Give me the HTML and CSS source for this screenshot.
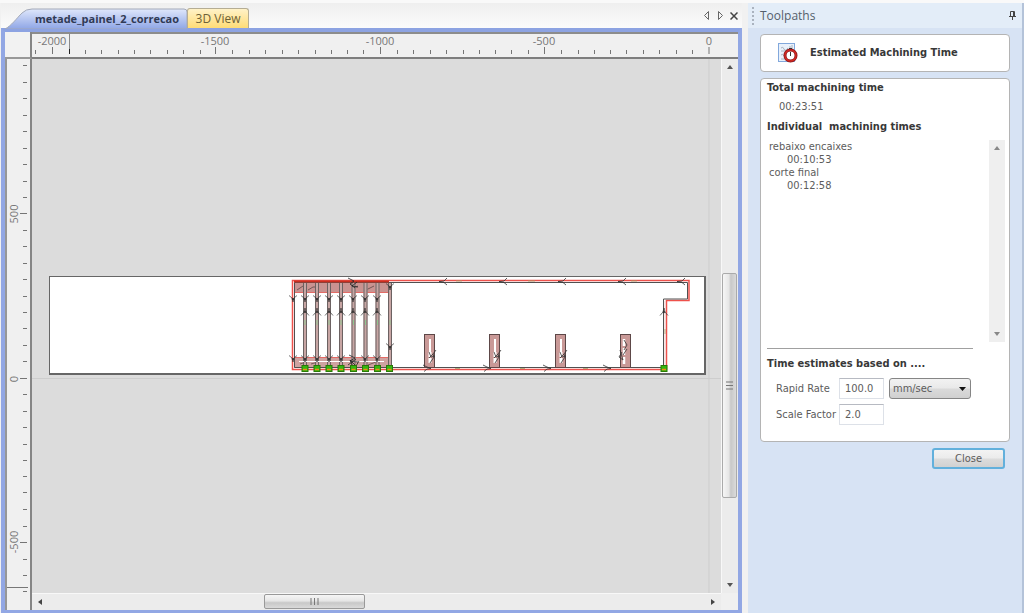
FILE: index.html
```html
<!DOCTYPE html>
<html lang="en">
<head>
<meta charset="utf-8">
<title>metade_painel_2_correcao</title>
<link rel="stylesheet" href="styles.css">
</head>
<body>
<div class="app">
  <main class="document">
    <div class="tabbar">
      <button class="tab tab-active" type="button">
        <svg class="tab-shape" width="184" height="21" viewBox="0 0 184 21" aria-hidden="true">
          <defs><linearGradient id="tabBlue" x1="0" y1="0" x2="0" y2="1"><stop offset="0" stop-color="#dfe7fb"/><stop offset="1" stop-color="#8fa6e6"/></linearGradient></defs>
          <path d="M0 21C6 18 12 10 17 5Q21 1 27 1H179Q182 1 182 4V21Z" fill="url(#tabBlue)" stroke="#a3a9b8"/>
        </svg>
        <span class="tab-label">metade_painel_2_correcao</span>
      </button>
      <button class="tab tab-view" type="button">3D View</button>
      <div class="tab-tools">
        <button class="tool" type="button" aria-label="Previous tab"><svg width="7" height="9" viewBox="0 0 7 9"><path d="M5.500 .5V8.500L1.500 4.500Z" fill="none" stroke="#666"/></svg></button>
        <button class="tool" type="button" aria-label="Next tab"><svg width="7" height="9" viewBox="0 0 7 9"><path d="M1.500 .5V8.500L5.500 4.500Z" fill="none" stroke="#666"/></svg></button>
        <button class="tool" type="button" aria-label="Close tab"><svg width="8" height="8" viewBox="0 0 8 8"><path d="M.5 .5L7.500 7.500M7.500 .5L.5 7.500" stroke="#444" stroke-width="1.500"/></svg></button>
      </div>
    </div>
    <div class="frame">
      <div class="corner"></div>
      <div class="ruler-top">
        <svg class="fill" aria-label="Horizontal ruler">
          <g transform="translate(-32 -34)">
            <path d="M35.500 50v4M85.500 50v4M101.500 50v4M118.500 50v4M134.500 50v4M150.500 50v4M167.500 50v4M183.500 50v4M200.500 50v4M232.500 50v4M249.500 50v4M265.500 50v4M282.500 50v4M298.500 50v4M315.500 50v4M331.500 50v4M347.500 50v4M363.500 50v4M397.500 50v4M413.500 50v4M430.500 50v4M446.500 50v4M463.500 50v4M479.500 50v4M495.500 50v4M511.500 50v4M528.500 50v4M561.500 50v4M578.500 50v4M594.500 50v4M610.500 50v4M626.500 50v4M643.500 50v4M659.500 50v4M676.500 50v4M692.500 50v4M52.500 47v7M215.500 47v7M380.500 47v7M544.500 47v7M709 47v7" stroke="#757575"/>
            <path d="M69.500 34V54" stroke="#8a8a8a"/><path d="M69.500 49V54" stroke="#222"/>
            <g class="scale" text-anchor="middle"><text x="52" y="45">-2000</text><text x="215" y="45">-1500</text><text x="380" y="45">-1000</text><text x="544" y="45">-500</text><text x="709" y="45">0</text></g>
          </g>
        </svg>
      </div>
      <div class="ruler-left">
        <svg class="fill" aria-label="Vertical ruler">
          <g transform="translate(-7 -59)">
            <path d="M23 65.500h4M23 82.500h4M23 98.500h4M23 115.500h4M23 131.500h4M23 148.500h4M23 164.500h4M23 181.500h4M23 197.500h4M23 230.500h4M23 246.500h4M23 263.500h4M23 279.500h4M23 296.500h4M23 312.500h4M23 328.500h4M23 345.500h4M23 361.500h4M23 394.500h4M23 411.500h4M23 427.500h4M23 444.500h4M23 460.500h4M23 476.500h4M23 492.500h4M23 509.500h4M23 526.500h4M23 559.500h4M23 575.500h4M23 591.500h4M20 213.500h7M20 378.500h7M20 542.500h7" stroke="#757575"/>
            <path d="M7 587.500H28" stroke="#777"/>
            <g class="scale" text-anchor="middle"><text transform="translate(18 214) rotate(-90)">500</text><text transform="translate(18 379) rotate(-90)">0</text><text transform="translate(18 542) rotate(-90)">-500</text></g>
          </g>
        </svg>
      </div>
      <div class="canvas">
        <svg class="fill" role="img" aria-label="Toolpath preview">
          <defs>
            <g id="vdown" fill="none" stroke="#333" stroke-width=".7"><path d="M-4 -3.500L-1 -1L0 3L1 -1L4 -3.500"/><circle r=".8" fill="#111"/></g>
            <g id="vup" fill="none" stroke="#333" stroke-width=".7"><path d="M-4 3.500L-1 0L0 -4L1 0L4 3.500"/><circle r=".8" fill="#111"/></g>
            <path id="aleft" d="M5 -3.500L2 -.5L-3 0L2 1L5 3.500" fill="none" stroke="#333" stroke-width=".8"/>
            <path id="aright" d="M-5 -3L-1 -1L3 .5L-1 1L-4 3.500" fill="none" stroke="#333" stroke-width=".8"/>
            <g id="rail"><rect x="-2" y="282" width="4" height="87" fill="#c7a5a3"/><path d="M-1.500 282V368M1.500 282V368" stroke="#6c6262"/><path d="M0 320V325" stroke="#8fc68f"/></g>
            <g id="node"><rect x="-3" y="365.500" width="6" height="6" fill="#35b80e" stroke="#2a7a08"/><path d="M-2 369.500H2" stroke="#f08a18" stroke-width="1.500"/></g>
            <g id="pocket"><rect x=".5" y="334.500" width="10" height="33" fill="#c99997" stroke="#5d4747"/><path d="M6 339V352" stroke="#fff" stroke-width="2"/><path d="M6 352V364" stroke="#fff" stroke-width="3" stroke-dasharray="5 1"/><path d="M12 350L9 354L10 357L6 363M9 354L5 358M5 352L7 357L11 356" fill="none" stroke="#333" stroke-width=".8"/></g>
          </defs>
          <g transform="translate(-32 -59)">
            <path d="M709 59V2000M32 378.500H2000" stroke="#cdcdcd" stroke-width="1"/>
            <rect x="49" y="276" width="657" height="99" fill="#666"/><rect x="50" y="277" width="654" height="96" fill="#fff"/>
            <rect x="294" y="282" width="96" height="10" fill="#c99391"/><path d="M294 292.500H390" stroke="#e36b66"/>
            <rect x="294" y="358" width="96" height="10" fill="#cfa2a0"/><path d="M294 357.500H390" stroke="#e36b66"/>
            <path d="M297 290L303 286M308 290L313 287L318 287M352 289L358 286M366 290L374 286M300 364L306 362M311 364L318 362M368 365L376 362" fill="none" stroke="#5a4848" stroke-width=".8"/>
            <use href="#rail" x="305"/><use href="#rail" x="317"/><use href="#rail" x="329"/><use href="#rail" x="341"/><use href="#rail" x="353.500"/><use href="#rail" x="365.500"/><use href="#rail" x="377.500"/><use href="#rail" x="390"/>
            <path d="M299 361.500H384" stroke="#fff"/>
            <path d="M292.500 369.500V280.500H689V300.500H666.500V369.500Z" fill="none" stroke="#ee514b" stroke-width="1.500"/>
            <path d="M294.500 367.500V282.500H687.500V299H663.500V367.500Z" fill="none" stroke="#505050"/>
            <path d="M294 281.500H389" stroke="#c92e20" stroke-width="2"/><path d="M665 301V366" stroke="#f1d0ce"/>
            <path d="M456 281H462M528 281H535M631 281H637M455 368.500H460M520 368.500H525M583 368.500H588M665 329V334" stroke="#a5a56a" stroke-width=".8"/>
            <use href="#vdown" x="293" y="299"/><use href="#vdown" x="293" y="359"/>
            <use href="#vdown" x="305" y="299"/><use href="#vdown" x="317" y="299"/><use href="#vdown" x="329" y="299"/><use href="#vdown" x="341" y="299"/><use href="#vdown" x="353" y="299"/><use href="#vdown" x="365" y="299"/><use href="#vdown" x="377" y="299"/>
            <use href="#vup" x="305" y="312"/><use href="#vup" x="317" y="312"/><use href="#vup" x="329" y="312"/><use href="#vup" x="341" y="312"/><use href="#vup" x="353" y="312"/><use href="#vup" x="365" y="312"/><use href="#vup" x="377" y="312"/>
            <use href="#vdown" x="305" y="359"/><use href="#vdown" x="317" y="359"/><use href="#vdown" x="329" y="359"/><use href="#vdown" x="341" y="359"/><use href="#vdown" x="365" y="359"/><use href="#vdown" x="377" y="359"/>
            <use href="#vdown" x="390" y="287"/><use href="#vdown" x="390" y="347"/>
            <path d="M348 278L354 281L350 284L355 288M357 282L352 286L358 287M349 355L355 358L350 361L358 362M352 365L350 360L356 366L359 361M348 365L356 359" fill="none" stroke="#222" stroke-width=".8"/>
            <use href="#pocket" x="424"/><use href="#pocket" x="489"/><use href="#pocket" x="555"/>
            <g><rect x="620.500" y="334.500" width="10" height="33" fill="#c99997" stroke="#5d4747"/><path d="M624 339V365" stroke="#fff" stroke-width="2.500" stroke-dasharray="7 2"/><path d="M624 340L627 345L624 350M622 352L619 357L623 360L620 350M623 355L627 349" fill="none" stroke="#333" stroke-width=".8"/></g>
            <use href="#aleft" x="442" y="281.500"/><use href="#aleft" x="502" y="281.500"/><use href="#aleft" x="561" y="281.500"/><use href="#aleft" x="621" y="281.500"/><use href="#aleft" x="680" y="281.500"/>
            <use href="#aright" x="428" y="368"/><use href="#aright" x="488" y="368"/><use href="#aright" x="548" y="368"/><use href="#aright" x="608" y="368"/>
            <use href="#vup" x="664" y="312"/>
            <use href="#node" x="305"/><use href="#node" x="317"/><use href="#node" x="329"/><use href="#node" x="341"/><use href="#node" x="353.500"/><use href="#node" x="365.500"/><use href="#node" x="377.500"/><use href="#node" x="389.500"/><use href="#node" x="664"/>
          </g>
        </svg>
      </div>
      <div class="scroll-v">
        <button class="arrow" type="button" aria-label="Scroll up"><svg width="6" height="4" viewBox="0 0 6 4"><path d="M0 4L3 0L6 4Z" fill="#555"/></svg></button>
        <div class="track-space space-above"></div>
        <div class="thumb-v"><svg width="7" height="9" viewBox="0 0 7 9"><path d="M0 1H7M0 4.500H7M0 8H7" stroke="#777"/></svg></div>
        <div class="track-space space-below"></div>
        <button class="arrow" type="button" aria-label="Scroll down"><svg width="6" height="4" viewBox="0 0 6 4"><path d="M0 0L3 4L6 0Z" fill="#555"/></svg></button>
      </div>
      <div class="scroll-h">
        <button class="arrow" type="button" aria-label="Scroll left"><svg width="4" height="6" viewBox="0 0 4 6"><path d="M4 0L0 3L4 6Z" fill="#444"/></svg></button>
        <div class="track-space space-before"></div>
        <div class="thumb-h"><svg width="9" height="7" viewBox="0 0 9 7"><path d="M1 0V7M4.500 0V7M8 0V7" stroke="#777"/></svg></div>
        <div class="track-space space-after"></div>
        <button class="arrow" type="button" aria-label="Scroll right"><svg width="4" height="6" viewBox="0 0 4 6"><path d="M0 0L4 3L0 6Z" fill="#444"/></svg></button>
      </div>
    </div>
  </main>
  <aside class="panel">
    <header class="panel-head">
      <span class="grip"></span>
      <span class="panel-title">Toolpaths</span>
      <button class="tool" type="button" aria-label="Pin panel"><svg width="7" height="9" viewBox="0 0 7 9"><path d="M1.500 5V.5H5.500V5M0 5.500H7M3.500 6V9M4.500 1V5" fill="none" stroke="#444"/></svg></button>
    </header>
    <div class="panel-body">
      <section class="card title-card">
        <svg width="21" height="21" viewBox="0 0 21 21" aria-hidden="true">
          <rect x=".5" y=".5" width="16" height="18" fill="#e9f1fb" stroke="#82a8dc"/>
          <path d="M3 5Q5 3 6 6T10 5M12 3V7M14 2V6M3 8H8M3 12Q5 10 6 13M3 16H7" fill="none" stroke="#aab2bd"/>
          <circle cx="12.500" cy="12.500" r="5.500" fill="#fff" stroke="#8a1a1a" stroke-width="3"/><circle cx="12.500" cy="12.500" r="5.500" fill="none" stroke="#d12722" stroke-width="1.500"/>
          <path d="M12.500 9V13M11 5.500H14" stroke="#333"/>
        </svg>
        <h1 class="heading">Estimated Machining Time</h1>
      </section>
      <section class="card main-card">
        <h2 class="heading">Total machining time</h2>
        <p class="total">00:23:51</p>
        <h2 class="heading pre">Individual  machining times</h2>
        <div class="list-row">
          <dl class="times"><dt>rebaixo encaixes</dt><dd>00:10:53</dd><dt>corte final</dt><dd>00:12:58</dd></dl>
          <div class="list-scroll">
            <svg width="6" height="4" viewBox="0 0 6 4"><path d="M0 4L3 0L6 4Z" fill="#888"/></svg>
            <svg width="6" height="4" viewBox="0 0 6 4"><path d="M0 0L3 4L6 0Z" fill="#888"/></svg>
          </div>
        </div>
        <hr class="rule">
        <h2 class="heading">Time estimates based on ....</h2>
        <form class="settings">
          <label for="rate">Rapid Rate</label>
          <input id="rate" type="text" value="100.0">
          <div class="picker">
            <select aria-label="Rate unit"><option>mm/sec</option></select>
            <svg class="picker-arrow" width="7" height="4" viewBox="0 0 7 4" aria-hidden="true"><path d="M0 0H7L3.500 4Z" fill="#111"/></svg>
          </div>
          <label for="factor">Scale Factor</label>
          <input id="factor" type="text" value="2.0">
        </form>
      </section>
      <button class="close" type="button">Close</button>
    </div>
  </aside>
</div>
</body>
</html>
```
FILE: styles.css
```css
* { box-sizing: border-box; }
body { margin: 0; font: 11px/13px "DejaVu Sans Condensed", "Noto Sans", sans-serif; color: #5c5c5c; background: #f1f1f1; }
button { font: inherit; color: inherit; border: 0; background: none; padding: 0; }
svg { display: block; }
h1, h2, p, dl, dd { margin: 0; }
.app { display: flex; min-height: 100vh; gap: 6px; border-top: 3px solid #f9f9f9; }
.document { flex: 1; min-width: 0; display: flex; flex-direction: column; padding-left: 1px; }

.tabbar { display: flex; height: 25px; align-items: flex-end; padding-left: 4px; background: linear-gradient(#efefef, #fbfbfb); font-family: "Open Sans", sans-serif; font-size: 12px; }
.tab { position: relative; height: 20px; }
.tab-active { width: 182px; padding-left: 22px; font-size: 11px; font-weight: bold; color: #303a55; }
.tab-shape { position: absolute; left: 0; top: 0; }
.tab-label { position: relative; }
.tab-view { width: 62px; border: 1px solid #b5ad94; border-bottom: 0; border-radius: 3px 3px 0 0; background: linear-gradient(#fff2c8, #ffdc76); color: #6d6136; }
.tab-tools { display: flex; align-items: center; gap: 6px; margin-left: auto; height: 25px; padding-right: 4px; }
.tool { display: grid; place-items: center; width: 8px; height: 12px; }

.frame { flex: 1; display: grid; grid-template-columns: 27px 1fr 17px; grid-template-rows: 27px 1fr 17px; border: 4px solid #92a7e4; border-bottom-width: 3px; border-top-color: #8da3e2; background: #f0f0f0; }
.fill { width: 100%; height: 100%; position: absolute; inset: 0; }
.corner { border-right: 2px solid #858585; border-bottom: 2px solid #999; background: #f2f2f2; }
.ruler-top { position: relative; grid-column: 2 / 4; border-top: 2px solid #8c8c8c; border-bottom: 2px solid #7e7e7e; }
.ruler-left { position: relative; grid-row: 2 / 4; border-left: 2px solid #979797; border-right: 2px solid #858585; }
.scale { font: 11px "Open Sans", sans-serif; fill: #777; }
.canvas { position: relative; overflow: hidden; background: #dcdcdc; }
.arrow { flex: none; display: grid; place-items: center; width: 16px; height: 16px; }
.scroll-v { display: flex; flex-direction: column; border-left: 1px solid #f8f8f8; background: #ececec; }
.scroll-h { grid-column: 2; display: flex; border-top: 1px solid #f8f8f8; background: #ececec; }
.space-above { flex: 199; }
.space-below { flex: 79; }
.thumb-v { flex: 224; width: 15px; display: grid; place-items: center; border: 1px solid #aaa; border-radius: 2px; background: linear-gradient(90deg, #f6f6f6, #e6e6e6 45%, #c8c8c8 60%, #dadada); }
.space-before { flex: 217; }
.space-after { flex: 341; }
.thumb-h { flex: 99; height: 15px; display: grid; place-items: center; border: 1px solid #999; border-radius: 2px; background: linear-gradient(#f6f6f6, #e6e6e6 45%, #c8c8c8 60%, #dadada); }

.panel { flex: none; width: 276px; background: #d7e3f4; border-right: 2px solid #b4c3d9; }
.panel-head { display: flex; align-items: center; height: 25px; padding: 0 6px 0 4px; background: #e3edf8; font-family: "Open Sans", sans-serif; font-size: 12px; color: #555f6c; }
.grip { width: 2px; height: 18px; margin-right: 6px; background: repeating-linear-gradient(#aab3bf 0 2px, transparent 2px 4px); }
.panel-title { flex: 1; }
.panel-body { display: flex; flex-direction: column; gap: 6px; padding: 6px 12px; }
.card { border: 1px solid #b4b4b4; border-radius: 4px; background: #fff; }
.title-card { display: flex; align-items: center; gap: 11px; min-height: 38px; padding-left: 17px; }
.heading { font-size: 11px; line-height: 14px; font-weight: bold; color: #383838; }
.pre { white-space: pre; }
.main-card { padding: 2px 4px 16px 6px; }
.total { padding: 5px 0 7px 12px; }
.list-row { display: flex; justify-content: space-between; margin-top: 6px; min-height: 202px; }
.times { padding: 0 2px; }
.times dd { padding-left: 18px; }
.list-scroll { display: flex; flex-direction: column; justify-content: space-between; align-items: center; width: 16px; padding: 6px 0; background: #efefef; }
.rule { width: 206px; margin: 6px 0 8px; border: 0; border-top: 1px solid #a0a0a0; }
.settings { display: grid; grid-template-columns: 58px 45px 82px; gap: 5px; align-items: center; margin: 7px 0 0 9px; white-space: nowrap; }
.settings input { width: 100%; height: 21px; padding: 0 5px; border: 1px solid #dde1e8; border-top-color: #b7bac2; background: #fff; font: inherit; color: #5c5c5c; }
.picker { position: relative; }
.picker-arrow { position: absolute; right: 5px; top: 9px; pointer-events: none; }
.picker select { appearance: none; display: block; width: 100%; height: 21px; padding: 0 3px; border: 1px solid #858585; border-radius: 3px; font: inherit; color: #5c5c5c; background: linear-gradient(#f2f2f2, #e9e9e9 48%, #dadada 52%, #d0d0d0); }
.close { align-self: flex-end; width: 73px; height: 21px; margin-right: 5px; border: 2px solid #62b0dc; border-radius: 3px; background: linear-gradient(#f3f3f3, #ebebeb 48%, #dcdcdc 52%, #d1d1d1); }
```
